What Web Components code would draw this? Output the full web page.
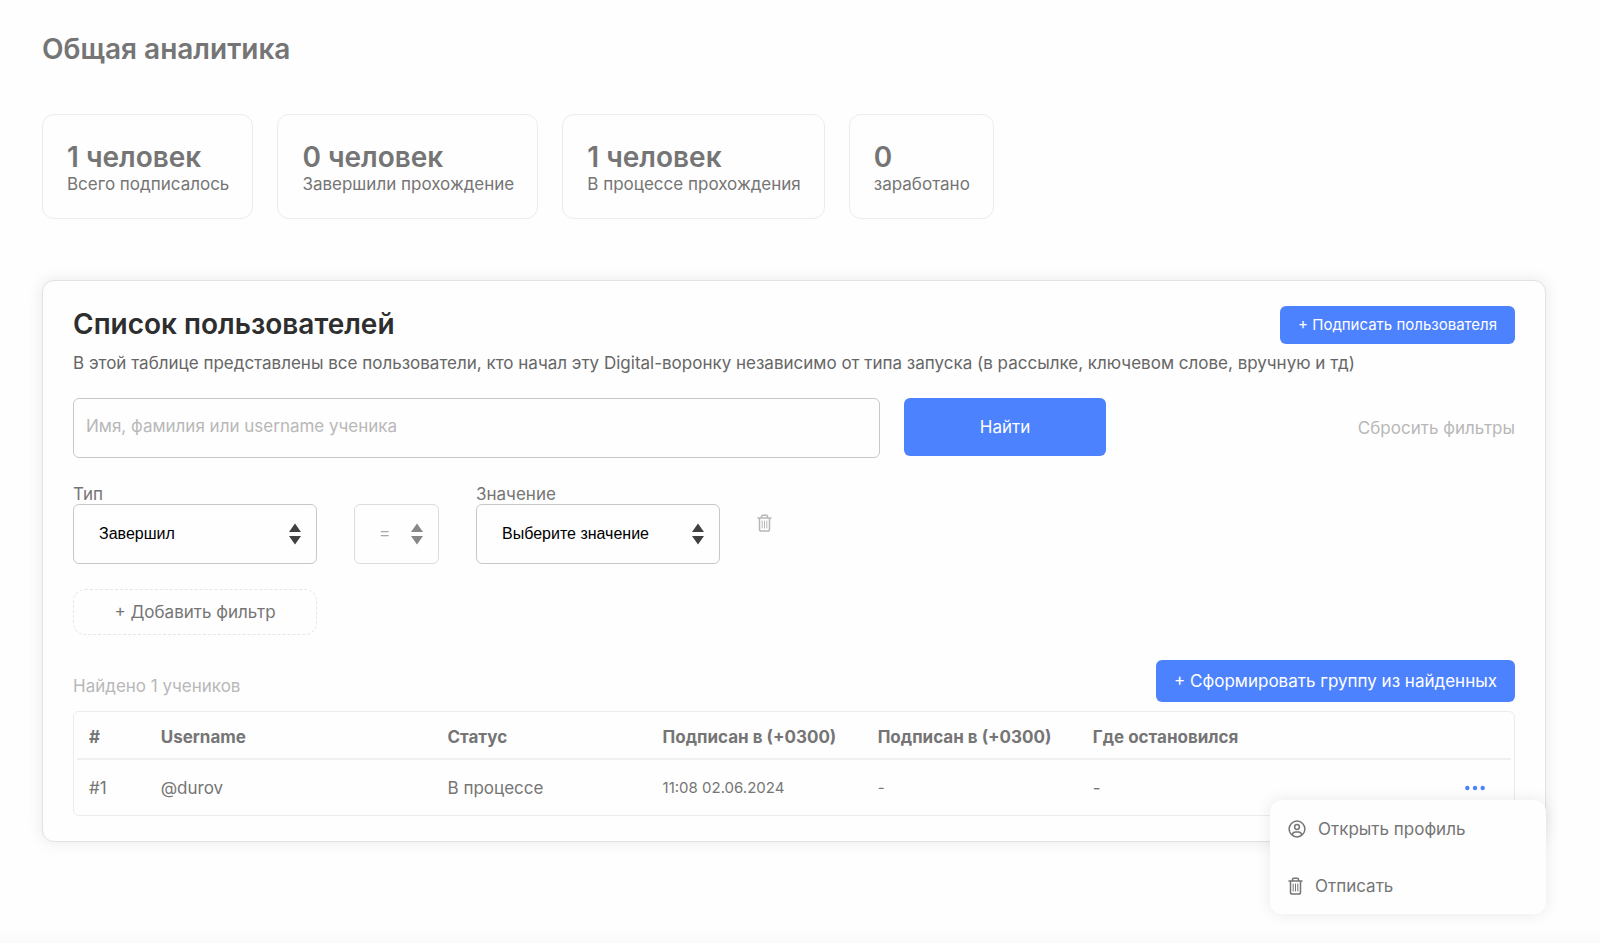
<!DOCTYPE html>
<html lang="ru">
<head>
<meta charset="utf-8">
<meta name="viewport" content="width=device-width, initial-scale=1">
<title>Общая аналитика</title>
<style>
  body { margin: 0; background: #fefefe; font-family: Inter, "Noto Sans", sans-serif; }
</style>
</head>
<body>
<analytics-page></analytics-page>
<script>
const define = (name, html, setup) => {
  const template = document.createElement('template');
  template.innerHTML = '<style>*,*::before{box-sizing:border-box}</style>' + html;
  customElements.define(name, class extends HTMLElement {
    constructor() {
      super();
      this.attachShadow({ mode: 'open' }).append(template.content.cloneNode(true));
    }
    connectedCallback() { if (setup) setup(this, this.shadowRoot); }
  });
};

const TRASH = `<g fill="none" stroke="currentColor" stroke-linecap="round" stroke-linejoin="round">
  <path stroke-width="1.5" d="M1 4h13M2.500 4v11.200q0 1.800 1.800 1.800h6.400q1.800 0 1.800-1.800V4M4.500 4V2.600Q4.500 1.200 5.900 1.200h3.200Q10.500 1.200 10.500 2.600V4"/>
  <path stroke-width="1" d="M5.200 7v7M7.500 7v7M9.800 7v7"/></g>`;
const PERSON = `<g fill="none" stroke="currentColor" stroke-width="1.5">
  <circle cx="9" cy="9" r="7.900"/><circle cx="9" cy="7" r="2.400"/><path d="M4.200 15c.5-2 1.800-2.900 3.400-2.900h2.800c1.600 0 2.900.9 3.400 2.900"/></g>`;
const ICONS = {
  trash: ['0 0 15 18', 15, TRASH],
  person: ['0 0 18 18', 18, PERSON],
  dots: ['0 0 20 18', 20, '<g fill="currentColor"><circle cx="2.300" cy="9" r="2.200"/><circle cx="10" cy="9" r="2.200"/><circle cx="17.700" cy="9" r="2.200"/></g>'],
  sort: ['0 0 12 22', 12, '<path fill="currentColor" d="M6 .5 12 9H0zM6 21.500 12 13H0z"/>']
};

define('ui-icon', `<style>:host{display:inline-flex;flex:none} svg{display:block}</style><svg aria-hidden="true"></svg>`,
  (host, root) => {
    const [box, width, shape] = ICONS[host.getAttribute('name')];
    const svg = root.querySelector('svg');
    svg.setAttribute('viewBox', box);
    svg.setAttribute('width', width);
    svg.setAttribute('height', box.split(' ')[3]);
    svg.innerHTML = shape;
  });

define('stat-card', `<style>
  :host{display:block;padding:24px 23px 24px 24px;border:1px solid #ececec;border-radius:12px;color:#757575}
  strong{display:block;font-size:28px;line-height:36px;font-weight:600}
  span{display:block;font-size:17px;line-height:19px}
</style><strong><slot name="value"></slot></strong><span><slot></slot></span>`);

define('ui-button', `<style>
  :host{display:inline-block}
  button{display:block;width:100%;padding:0 18px;border:0;border-radius:6px;background:#4d82ff;color:#fff;font:400 17px/42px Inter,sans-serif;cursor:pointer;white-space:nowrap}
  :host([size=small]) button{font-size:15px;line-height:38px}
  :host([size=large]) button{line-height:58px}
  :host([kind=dashed]) button{border:1px dashed #e6e6e6;border-radius:12px;background:none;color:#757575;line-height:44px}
  :host([kind=plain]) button{background:none;color:#b8b8b8;padding:0}
</style><button type="button"><slot></slot></button>`);

define('filter-select', `<style>
  :host{display:block;width:244px;color:#757575}
  :host([compact]){width:85px;opacity:.62}
  label{display:block;font-size:17px;line-height:20px}
  .box{display:grid;align-items:center}
  select,ui-icon{grid-area:1/1}
  select{width:100%;height:60px;padding:0 25px;border:1px solid #c8c8c8;border-radius:6px;background:#fefefe;color:#000;font:16px/20px "Liberation Sans",sans-serif;appearance:none;opacity:1}
  :host([compact]) select{color:#757575}
  ui-icon{justify-self:end;margin-right:16px;color:#404040;pointer-events:none}
</style><label for="choice"></label><div class="box"><select id="choice"><option></option></select><ui-icon name="sort"></ui-icon></div>`,
  (host, root) => {
    const label = root.querySelector('label');
    const select = root.querySelector('select');
    label.textContent = host.getAttribute('label') || '';
    if (!label.textContent) { label.remove(); select.setAttribute('aria-label', 'Условие'); }
    select.disabled = host.hasAttribute('compact');
    root.querySelector('option').textContent = host.getAttribute('value');
  });

define('action-menu', `<style>
  :host{display:block;width:276px;border-radius:12px;background:#fefefe;box-shadow:0 0 16px rgba(0,0,0,.09)}
  button{display:flex;align-items:center;gap:12px;width:100%;height:57px;padding:0 18px;border:0;background:none;color:#757575;font:400 17px/20px Inter,sans-serif;text-align:left}
</style>
<button type="button"><ui-icon name="person"></ui-icon>Открыть профиль</button>
<button type="button"><ui-icon name="trash"></ui-icon>Отписать</button>`);

define('users-table', `<style>
  :host{display:block;padding:0 3px;border:1px solid #ececec;border-radius:6px;color:#757575}
  table{width:100%;table-layout:fixed;border-collapse:separate;border-spacing:0;font-size:17px;line-height:20px}
  th,td{height:55px;padding:1px 0 0 12px;text-align:left;font-weight:400}
  th{height:48px;padding-top:4px;font-weight:700;border-bottom:2px solid #f0f0f0}
  .id{width:5%} .name{width:20%} .mid{width:15%} .date{font-size:15px}
  .last{display:flex;justify-content:space-between;align-items:center}
  .more{position:relative;padding-right:26px}
  .more button{display:flex;padding:0;border:0;background:none;color:#4d82ff}
  action-menu{position:absolute;top:21px;right:-35px;z-index:1}
</style>
<table>
  <thead><tr><th class="id">#</th><th class="name">Username</th><th class="mid">Статус</th><th class="mid">Подписан в (+0300)</th><th class="mid">Подписан в (+0300)</th><th>Где остановился</th></tr></thead>
  <tbody><tr><td>#1</td><td>@durov</td><td>В процессе</td><td class="date">11:08 02.06.2024</td><td class="date">-</td>
    <td><div class="last"><span>-</span><div class="more"><button type="button" aria-label="Действия"><ui-icon name="dots"></ui-icon></button><action-menu></action-menu></div></div></td></tr></tbody>
</table>`);

define('users-panel', `<style>
  :host{display:block;padding:25px 30px;border:1px solid #e2e2e2;border-radius:12px;background:#fefefe;box-shadow:0 0 16px rgba(0,0,0,.09)}
  header,.search,.filters,.found{display:flex;justify-content:space-between}
  h2{margin:0;font-size:28px;line-height:36px;font-weight:600;color:#2e2e2e}
  p{margin:0;font-size:17px;line-height:20px;color:#666}
  header + p{margin-top:9px}
  .search{gap:24px;margin-top:25px}
  input{flex:1;min-width:0;height:60px;padding:0 12px 4px;border:1px solid #c8c8c8;border-radius:6px;background:none;font:400 17px/20px Inter,sans-serif;outline:0}
  input::placeholder{color:#b8b8b8;opacity:1}
  .find{width:202px;align-self:flex-start}
  .reset{width:385px;display:flex;justify-content:flex-end;align-items:center}
  .filters{justify-content:flex-start;align-items:flex-end;gap:37px;margin-top:26px}
  .remove{align-self:center;padding:0;border:0;background:none;color:#b8b8b8}
  .add{width:244px;margin-top:25px}
  .found{margin:25px 0 9px;align-items:center;color:#b8b8b8}
  .found p{color:inherit;padding-top:10px}
</style>
<header><h2>Список пользователей</h2><ui-button size="small">+ Подписать пользователя</ui-button></header>
<p>В этой таблице представлены все пользователи, кто начал эту Digital-воронку независимо от типа запуска (в рассылке, ключевом слове, вручную и тд)</p>
<div class="search">
  <input type="text" aria-label="Имя, фамилия или username ученика" placeholder="Имя, фамилия или username ученика">
  <ui-button class="find" size="large">Найти</ui-button>
  <div class="reset"><ui-button kind="plain">Сбросить фильтры</ui-button></div>
</div>
<div class="filters">
  <filter-select label="Тип" value="Завершил"></filter-select>
  <filter-select compact value="="></filter-select>
  <filter-select label="Значение" value="Выберите значение"></filter-select>
  <button class="remove" type="button" aria-label="Удалить фильтр"><ui-icon name="trash"></ui-icon></button>
</div>
<ui-button class="add" kind="dashed">+ Добавить фильтр</ui-button>
<div class="found"><p>Найдено 1 учеников</p><ui-button>+ Сформировать группу из найденных</ui-button></div>
<users-table></users-table>`);

define('analytics-page', `<style>
  :host{display:flex;flex-direction:column;min-height:100vh}
  main{flex:1;padding:31px 54px 24px 42px}
  h1{margin:0;font-size:28px;line-height:36px;font-weight:600;color:#757575}
  .stats{display:flex;flex-wrap:wrap;gap:24px;margin:47px 0 61px}
  footer{height:12px;background:linear-gradient(#fefefe,#fafafa)}
</style>
<main>
  <h1>Общая аналитика</h1>
  <section class="stats" aria-label="Показатели">
    <stat-card><span slot="value">1 человек</span>Всего подписалось</stat-card>
    <stat-card><span slot="value">0 человек</span>Завершили прохождение</stat-card>
    <stat-card><span slot="value">1 человек</span>В процессе прохождения</stat-card>
    <stat-card><span slot="value">0</span>заработано</stat-card>
  </section>
  <users-panel></users-panel>
</main>
<footer></footer>`);
</script>
</body>
</html>
